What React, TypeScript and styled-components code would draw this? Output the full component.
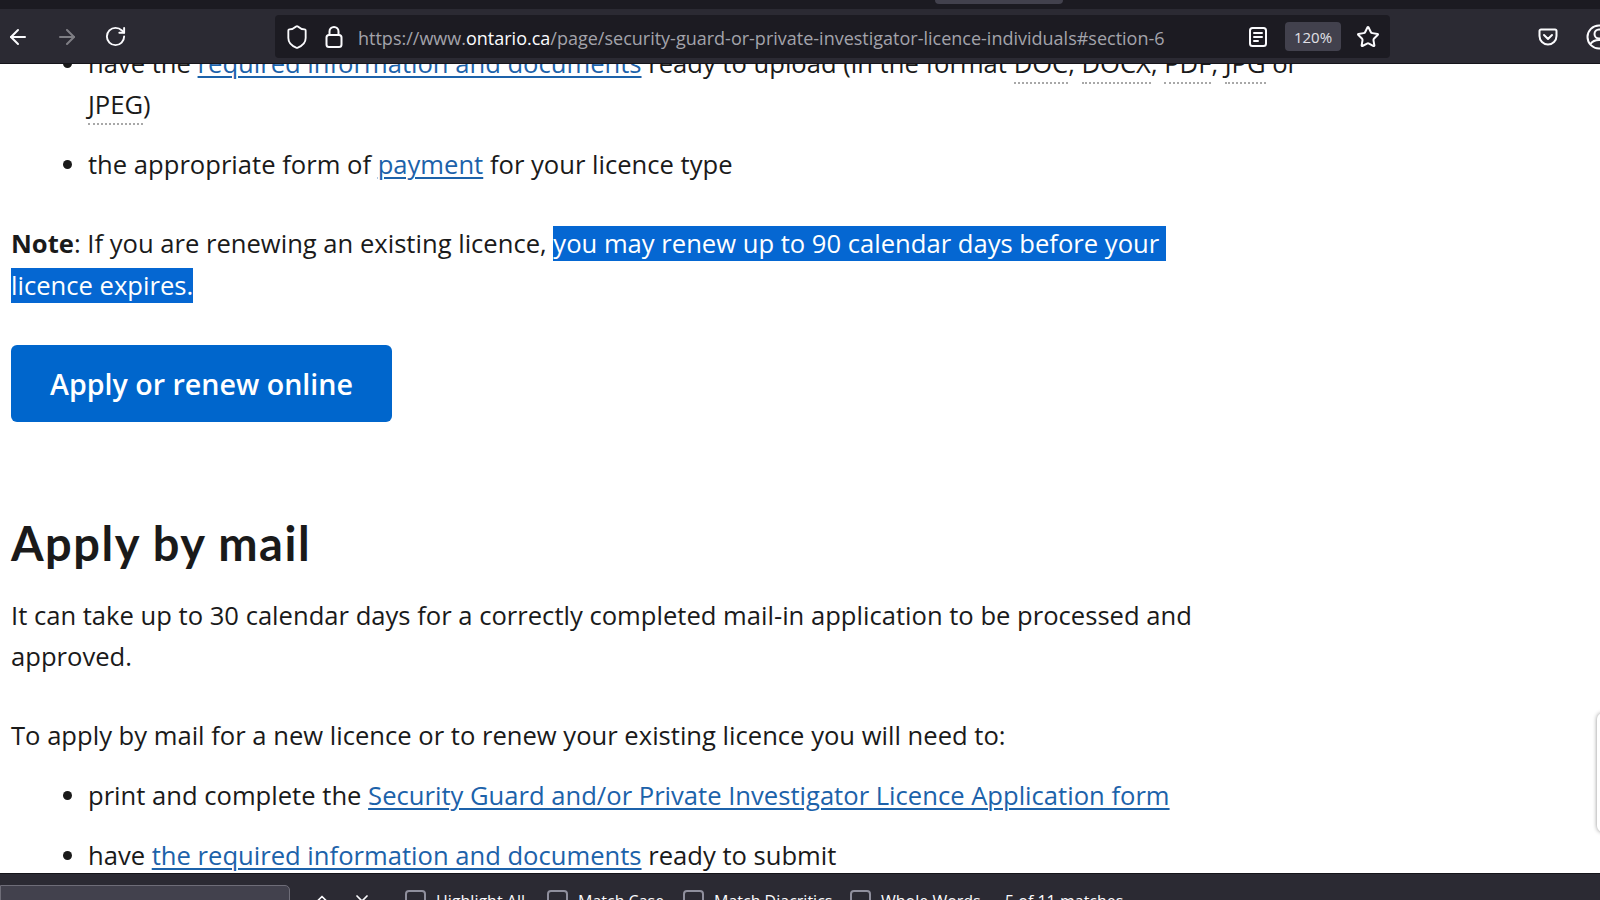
import React from 'react';
import styled, { createGlobalStyle } from 'styled-components';
import { ArrowLeft, ArrowRight, RotateCw, Shield, Star, ChevronUp, X } from 'lucide-react';

const GlobalStyle = createGlobalStyle`
  html, body {
    margin: 0;
    height: 100%;
    overflow: hidden;
    background: #fff;
  }
  * {
    box-sizing: border-box;
  }
`;

const Window = styled.div`
  position: relative;
  display: flex;
  flex-direction: column;
  width: 1600px;
  height: 900px;
  overflow: hidden;
  font-family: "Open Sans", "Liberation Sans", sans-serif;
`;

const TabStrip = styled.div`
  flex: none;
  height: 9px;
  padding-left: 935px;
  background: #1c1b22;
`;

const ActiveTab = styled.div`
  width: 128px;
  height: 4px;
  border-radius: 0 0 4px 4px;
  background: #42414d;
`;

const Toolbar = styled.div`
  flex: none;
  position: relative;
  z-index: 2;
  display: flex;
  align-items: center;
  height: 55px;
  padding-top: 1px;
  background: #2b2a33;
  color: #fbfbfe;
  border-bottom: 1px solid #15141a;
  overflow: hidden;
`;

const NavGroup = styled.div`
  flex: none;
  display: flex;
  align-items: center;
  gap: 25px;
  width: 275px;
  padding-left: 6px;
`;

const NavIcon = styled.span<{ $dim?: boolean }>`
  display: flex;
  opacity: ${(p) => (p.$dim ? 0.4 : 1)};
`;

const UrlBar = styled.div`
  flex: none;
  display: flex;
  align-items: center;
  width: 1115px;
  height: 43px;
  padding: 0 10px 0 9px;
  border-radius: 4px;
  background: #1c1b22;
`;

const UrlIcon = styled.span<{ $gap?: number }>`
  display: flex;
  margin-right: ${(p) => p.$gap ?? 0}px;
`;

const UrlText = styled.div`
  flex: 1;
  padding-top: 3px;
  font-size: 18px;
  white-space: nowrap;
  color: #a3a3ab;
`;

const UrlHost = styled.span`
  color: #fbfbfe;
`;

const ZoomBadge = styled.div`
  display: flex;
  align-items: center;
  justify-content: center;
  width: 56px;
  height: 29px;
  margin: 0 15px 0 17px;
  border-radius: 4px;
  background: #42414d;
  font-size: 15px;
  color: #e0e0e6;
`;

const ToolbarEnd = styled.div`
  flex: none;
  display: flex;
  align-items: center;
  gap: 28px;
  padding-left: 148px;
`;

const Page = styled.main`
  flex: 1;
  min-height: 0;
  overflow: hidden;
  padding-left: 11px;
  font-size: 25.6px;
  line-height: 41.6px;
  color: #1a1a1a;
  background: #fff;
`;

const BulletList = styled.ul<{ $top: number }>`
  max-width: 1310px;
  margin: ${(p) => p.$top}px 0 0;
  padding: 0 0 0 77px;
`;

const Bullet = styled.li`
  margin-bottom: 18.8px;
  &:last-child {
    margin-bottom: 0;
  }
`;

const Paragraph = styled.p<{ $top: number }>`
  max-width: 1220px;
  margin: ${(p) => p.$top}px 0 0;
`;

const TextLink = styled.a`
  color: #1c62aa;
  text-decoration: underline;
  text-decoration-thickness: 2px;
  text-underline-offset: 3px;
`;

const Abbr = styled.abbr`
  padding-bottom: 1px;
  text-decoration: none;
  border-bottom: 2px dotted #a8a8a8;
`;

const Selected = styled.span`
  background: #0567d2;
  color: #fff;
`;

const ApplyButton = styled.a`
  display: flex;
  align-items: center;
  justify-content: center;
  width: 381px;
  height: 77px;
  margin-top: 39px;
  border-radius: 6px;
  background: #0066cc;
  color: #fff;
  font-size: 28.6px;
  font-weight: 600;
`;

const Heading = styled.h2`
  margin: 88.5px 0 0;
  font-family: Lato, "Liberation Sans", sans-serif;
  font-size: 47px;
  font-weight: 700;
  letter-spacing: 1.5px;
  line-height: 64px;
  color: #1a1a1a;
`;

const FeedbackTab = styled.div`
  position: absolute;
  top: 713px;
  right: -4px;
  width: 7px;
  height: 119px;
  border-radius: 6px 0 0 6px;
  background: #fff;
  box-shadow: 0 0 4px rgba(0, 0, 0, 0.45);
`;

const FindBar = styled.div`
  flex: none;
  display: flex;
  align-items: flex-start;
  height: 27px;
  overflow: hidden;
  padding-top: 11px;
  border-top: 1px solid #15141a;
  background: #2b2a33;
  color: #fbfbfe;
  font-size: 16px;
`;

const FindInput = styled.div`
  flex: none;
  width: 290px;
  height: 40px;
  border: 1px solid #6e6d78;
  border-radius: 0 5px 5px 0;
  background: #42414d;
`;

const FindArrows = styled.div`
  flex: none;
  display: flex;
  align-items: flex-start;
  gap: 20px;
  width: 115px;
  padding-left: 22px;
`;

const FindArrow = styled.span<{ $top: number }>`
  display: flex;
  margin-top: ${(p) => p.$top}px;
`;

const FindOption = styled.label<{ $width: number }>`
  flex: none;
  display: flex;
  align-items: flex-start;
  gap: 10px;
  width: ${(p) => p.$width}px;
  margin-top: 5px;
`;

const OptionText = styled.span`
  padding-top: 1px;
  line-height: 21px;
`;

const CheckBox = styled.span`
  flex: none;
  width: 21px;
  height: 21px;
  border: 2px solid #8f8f9d;
  border-radius: 4px;
`;

const MatchCount = styled.span`
  margin-top: 6px;
  line-height: 21px;
`;

const ReaderIcon = () => (
  <svg width="20" height="22" viewBox="0 0 20 22" fill="none" stroke="currentColor" strokeWidth="2" strokeLinecap="round">
    <rect x="2" y="2" width="16" height="18" rx="2.5" />
    <path d="M6 7h8M6 11h8M6 15h4" />
  </svg>
);

const LockIcon = () => (
  <svg width="20" height="26" viewBox="0 0 20 26" fill="none" stroke="currentColor" strokeWidth="2">
    <rect x="2.5" y="11" width="15" height="12" rx="2.5" />
    <path d="M5.5 11V7.5a4.5 4.5 0 0 1 9 0V11" />
  </svg>
);

const PocketIcon = () => (
  <svg width="20" height="18" viewBox="0 0 20 18" fill="none" stroke="currentColor" strokeWidth="2" strokeLinecap="round" strokeLinejoin="round">
    <path d="M3 1.5h14a1.5 1.5 0 0 1 1.5 1.5v5a8.5 8.5 0 0 1-17 0V3A1.5 1.5 0 0 1 3 1.5z" />
    <path d="M6 7l4 4 4-4" />
  </svg>
);

const AccountIcon = () => (
  <svg width="26" height="26" viewBox="0 0 26 26" fill="none" stroke="currentColor" strokeWidth="2">
    <circle cx="13" cy="13" r="11.5" />
    <circle cx="13" cy="10" r="4.5" />
    <path d="M4.5 20c2-3 5-4 8.5-4s6.5 1 8.5 4" />
  </svg>
);

const App = () => {
  return (
    <Window>
      <GlobalStyle />
      <TabStrip>
        <ActiveTab />
      </TabStrip>
      <Toolbar>
        <NavGroup>
          <NavIcon><ArrowLeft size={24} strokeWidth={2} /></NavIcon>
          <NavIcon $dim><ArrowRight size={24} strokeWidth={2} /></NavIcon>
          <NavIcon><RotateCw size={23} strokeWidth={2} /></NavIcon>
        </NavGroup>
        <UrlBar>
          <UrlIcon $gap={14}><Shield size={26} strokeWidth={1.7} /></UrlIcon>
          <UrlIcon $gap={14}><LockIcon /></UrlIcon>
          <UrlText>
            https://www.<UrlHost>ontario.ca</UrlHost>/page/security-guard-or-private-investigator-licence-individuals#section-6
          </UrlText>
          <UrlIcon><ReaderIcon /></UrlIcon>
          <ZoomBadge>120%</ZoomBadge>
          <UrlIcon><Star size={24} strokeWidth={2} /></UrlIcon>
        </UrlBar>
        <ToolbarEnd>
          <PocketIcon />
          <AccountIcon />
        </ToolbarEnd>
      </Toolbar>

      <Page>
        <BulletList $top={-21.5}>
          <Bullet>
            have the <TextLink>required information and documents</TextLink> ready to upload (in the format{' '}
            <Abbr>DOC</Abbr>, <Abbr>DOCX</Abbr>, <Abbr>PDF</Abbr>, <Abbr>JPG</Abbr> or <Abbr>JPEG</Abbr>)
          </Bullet>
          <Bullet>
            the appropriate form of <TextLink>payment</TextLink> for your licence type
          </Bullet>
        </BulletList>
        <Paragraph $top={37}>
          <strong>Note</strong>: If you are renewing an existing licence,{' '}
          <Selected>you may renew up to 90 calendar days before your&nbsp;<wbr />licence expires.</Selected>
        </Paragraph>
        <ApplyButton>Apply or renew online</ApplyButton>
        <Heading>Apply by mail</Heading>
        <Paragraph $top={20}>
          It can take up to 30 calendar days for a correctly completed mail-in application to be processed and approved.
        </Paragraph>
        <Paragraph $top={37}>
          To apply by mail for a new licence or to renew your existing licence you will need to:
        </Paragraph>
        <BulletList $top={18.5}>
          <Bullet>
            print and complete the <TextLink>Security Guard and/or Private Investigator Licence Application form</TextLink>
          </Bullet>
          <Bullet>
            have <TextLink>the required information and documents</TextLink> ready to submit
          </Bullet>
        </BulletList>
      </Page>

      <FeedbackTab />

      <FindBar>
        <FindInput />
        <FindArrows>
          <FindArrow $top={4}><ChevronUp size={20} strokeWidth={2} /></FindArrow>
          <FindArrow $top={6}><X size={20} strokeWidth={2} /></FindArrow>
        </FindArrows>
        <FindOption $width={142}><CheckBox /><OptionText>Highlight All</OptionText></FindOption>
        <FindOption $width={136}><CheckBox /><OptionText>Match Case</OptionText></FindOption>
        <FindOption $width={167}><CheckBox /><OptionText>Match Diacritics</OptionText></FindOption>
        <FindOption $width={155}><CheckBox /><OptionText>Whole Words</OptionText></FindOption>
        <MatchCount>5 of 11 matches</MatchCount>
      </FindBar>
    </Window>
  );
};

export default App;
